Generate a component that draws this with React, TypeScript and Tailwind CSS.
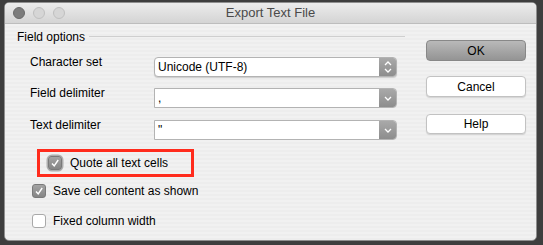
import React from 'react';

const font = { fontFamily: '"Liberation Sans", Arial, sans-serif' };

const Chevron = ({ up }: { up?: boolean }) => (
  <svg width="8" height="5" viewBox="0 0 8 5">
    <path d={up ? 'M1 4 L4 1 L7 4' : 'M1 1 L4 4 L7 1'} stroke="white" strokeWidth="1.3" fill="none" />
  </svg>
);

const Check = () => (
  <svg width="10" height="10" viewBox="0 0 10 10">
    <path d="M2 5.5 L4.2 7.8 L8.2 2" stroke="white" strokeWidth="1.4" fill="none" />
  </svg>
);

const CheckBox = ({ checked }: { checked?: boolean }) =>
  checked ? (
    <div className="w-[14px] h-[14px] rounded-[3px] bg-gradient-to-b from-[#a4a4a4] to-[#858585] border border-[#7a7a7a] flex items-center justify-center">
      <Check />
    </div>
  ) : (
    <div className="w-[14px] h-[14px] rounded-[3px] bg-white border border-[#a9a9a9]" />
  );

const Combo = ({ value, popup }: { value: string; popup?: boolean }) => (
  <div
    className={`mt-[3px] w-[243px] h-[20px] flex bg-white border border-[#b3b3b3] overflow-hidden ${
      popup ? 'rounded-[4px] shadow-[0_1px_1px_rgba(0,0,0,0.15)]' : 'rounded-r-[4px]'
    }`}
  >
    <div className="flex-1 pl-[3px] text-[12px] leading-[18px] text-black">{value}</div>
    <div className="w-[17px] bg-gradient-to-b from-[#a9a9a9] to-[#8d8d8d] flex flex-col items-center justify-center gap-[2px]">
      {popup && <Chevron up />}
      <Chevron />
    </div>
  </div>
);

const Row = ({ label, value, popup, mt }: { label: string; value: string; popup?: boolean; mt: string }) => (
  <div className={`flex items-start ${mt}`}>
    <div className="w-[137px] pl-[13px] text-[12px] leading-[16px] text-black">{label}</div>
    <Combo value={value} popup={popup} />
  </div>
);

const Button = ({ label, primary, mt, h }: { label: string; primary?: boolean; mt: string; h: string }) => (
  <div
    className={`${mt} ${h} w-[100px] rounded-[4px] flex items-center justify-center text-[12px] text-black ${
      primary
        ? 'bg-gradient-to-b from-[#b9b9b9] to-[#949494] border border-[#888888]'
        : 'bg-white border border-[#c2c2c2] shadow-[0_1px_1px_rgba(0,0,0,0.12)]'
    }`}
  >
    {label}
  </div>
);

export default function App() {
  return (
    <div className="w-[543px] h-[245px] bg-[#3e3e3e] overflow-hidden pt-[2px] pl-[4px]" style={font}>
      <div className="w-[533px] h-[239px] rounded-[5px] border border-[#8f8f8f] bg-[repeating-linear-gradient(0deg,#ededed_0px,#ededed_2px,#f1f1f1_2px,#f1f1f1_4px)] flex flex-col overflow-hidden">
        {/* title bar */}
        <div className="h-[21px] shrink-0 bg-gradient-to-b from-[#ececec] to-[#d4d4d4] border-b border-[#bdbdbd] grid grid-cols-[1fr_auto_1fr] items-center">
          <div className="flex items-center gap-[8px] pl-[8px]">
            <div className="w-[12px] h-[12px] rounded-full bg-[#7c7c7c] border border-[#6a6a6a]" />
            <div className="w-[12px] h-[12px] rounded-full bg-[#d6d6d6] border border-[#bfbfbf]" />
            <div className="w-[12px] h-[12px] rounded-full bg-[#d6d6d6] border border-[#bfbfbf]" />
          </div>
          <div className="text-[13px] text-[#4a4a4a]">Export Text File</div>
          <div />
        </div>

        {/* body */}
        <div className="flex">
          <div className="w-[400px] pl-[12px] pt-[5px]">
            <div className="flex items-center h-[16px]">
              <span className="text-[12px] text-black">Field options</span>
              <div className="flex-1 ml-[4px] h-[2px] border-t border-[#cfcfcf] border-b-white" />
            </div>
            <Row label="Character set" value="Unicode (UTF-8)" popup mt="mt-[9px]" />
            <Row label="Field delimiter" value="," mt="mt-[8px]" />
            <Row label="Text delimiter" value={'"'} mt="mt-[9px]" />

            <div className="mt-[9px] ml-[20px] w-[157px] h-[28px] border-[3px] border-[#ff2b1c] flex items-center pl-[8px]">
              <div className="rounded-[4px] shadow-[0_0_0_1.5px_rgba(120,120,120,0.55)]">
                <CheckBox checked />
              </div>
              <span className="ml-[8px] text-[12px] text-black">Quote all text cells</span>
            </div>
            <div className="mt-[5px] ml-[15px] flex items-center">
              <CheckBox checked />
              <span className="ml-[7px] text-[12px] text-black">Save cell content as shown</span>
            </div>
            <div className="mt-[12px] ml-[15px] flex items-center">
              <CheckBox />
              <span className="ml-[7px] text-[12px] text-black">Fixed column width</span>
            </div>
          </div>

          <div className="ml-[21px] flex flex-col">
            <Button label="OK" primary mt="mt-[16px]" h="h-[21px]" />
            <Button label="Cancel" mt="mt-[15px]" h="h-[21px]" />
            <Button label="Help" mt="mt-[17px]" h="h-[20px]" />
          </div>
        </div>
      </div>
    </div>
  );
}
